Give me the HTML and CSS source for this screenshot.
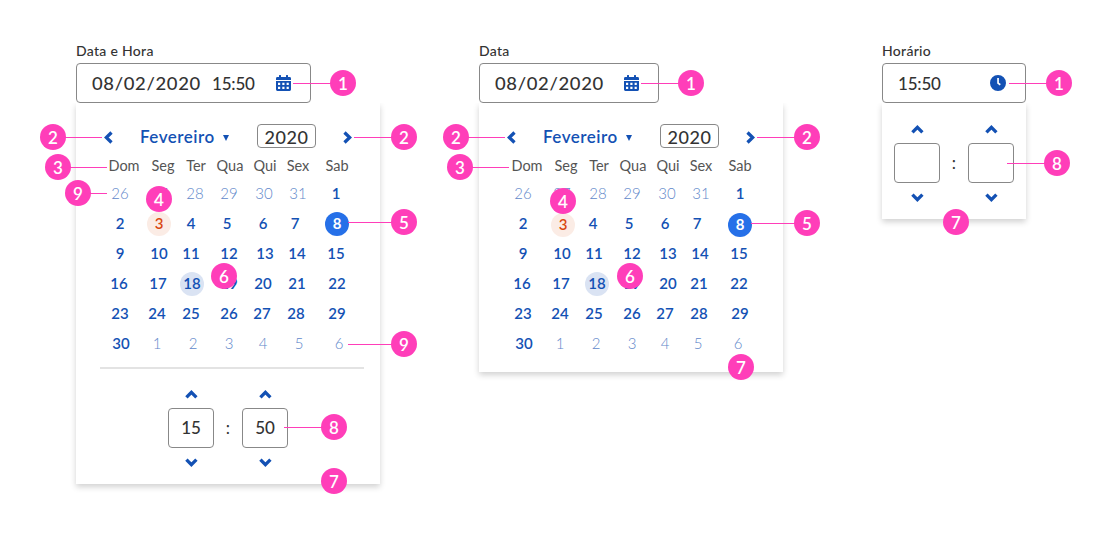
FILE: index.html
```html
<!DOCTYPE html>
<html lang="pt-BR">
<head>
<meta charset="utf-8">
<title>Data e Hora</title>
<link rel="stylesheet" href="styles.css">
</head>
<body>
<svg class="defs" width="0" height="0" aria-hidden="true">
  <symbol id="cal" viewBox="0 0 15 16"><path fill-rule="evenodd" d="M1.400 2H3V.5Q3 0 3.500 0h1Q5 0 5 .5V2h5V.5q0-.5.5-.5h1q.5 0 .5.5V2h1.600Q15 2 15 3.400V5H0V3.400Q0 2 1.400 2zM0 6h15v8.600Q15 16 13.600 16H1.400Q0 16 0 14.600zM2 7.700v2.200h2.200V7.700zM6.300 7.700v2.200h2.200V7.700zM10.600 7.700v2.200h2.200V7.700zM2 11.800v2.200h2.200v-2.200zM6.300 11.800v2.200h2.200v-2.200zM10.600 11.800v2.200h2.200v-2.200z"/></symbol>
  <symbol id="clock" viewBox="0 0 16 16"><path fill-rule="evenodd" d="M8 0a8 8 0 1 1 0 16A8 8 0 0 1 8 0zM7.200 3.100v5.500l2.600 1.900 1-1.400-1.900-1.400V3.100z"/></symbol>
  <symbol id="left" viewBox="0 0 9 13"><path class="stroke" d="M7.500 1.500 2.300 6.500l5.200 5"/></symbol>
  <symbol id="right" viewBox="0 0 9 13"><path class="stroke" d="M1.500 1.500 6.700 6.500l-5.200 5"/></symbol>
  <symbol id="up" viewBox="0 0 13 9"><path class="stroke" d="M1.400 7.400 6.400 2.400l5 5"/></symbol>
  <symbol id="down" viewBox="0 0 13 9"><path class="stroke" d="M1.400 1.600 6.400 6.600l5-5"/></symbol>
</svg>

<main class="board">
  <section class="picker">
    <label class="label">Data e Hora</label>
    <div class="field field-datetime"><span class="date">08/02/2020</span><span class="clock-value">15:50</span><svg class="icon-cal"><use href="#cal"/></svg></div>
    <div class="panel panel-datetime">
      <div class="nav"><svg class="side"><use href="#left"/></svg><span class="month">Fevereiro</span><i class="caret"></i><span class="year">2020</span><svg class="side"><use href="#right"/></svg></div>
      <div class="week"><span>Dom</span><span>Seg</span><span>Ter</span><span>Qua</span><span>Qui</span><span>Sex</span><span>Sab</span></div>
      <div class="days">
        <b class="off">26</b><b class="off r1">27</b><b class="off r3">28</b><b class="off">29</b><b class="off r1">30</b><b class="off r1">31</b><b class="l1">1</b>
        <b>2</b><b class="today r1">3</b><b class="l1">4</b><b class="l2">5</b><b>6</b><b class="l2">7</b><b class="selected">8</b>
        <b>9</b><b class="r1">10</b><b class="l1">11</b><b>12</b><b class="r2">13</b><b>14</b><b class="l1">15</b>
        <b class="l1">16</b><b>17</b><b class="hover">18</b><b>19</b><b>20</b><b>21</b><b>22</b>
        <b>23</b><b class="l1">24</b><b class="l1">25</b><b>26</b><b class="l1">27</b><b class="l1">28</b><b>29</b>
        <b class="r1">30</b><b class="off l1">1</b><b class="off r1">2</b><b class="off">3</b><b class="off">4</b><b class="off r2">5</b><b class="off r2">6</b>
      </div>
      <div class="divider"></div>
      <div class="time">
        <div class="unit"><svg class="step"><use href="#up"/></svg><span class="box">15</span><svg class="step"><use href="#down"/></svg></div>
        <span class="colon">:</span>
        <div class="unit"><svg class="step"><use href="#up"/></svg><span class="box">50</span><svg class="step"><use href="#down"/></svg></div>
      </div>
    </div>
  </section>

  <section class="picker">
    <label class="label">Data</label>
    <div class="field field-date"><span class="date">08/02/2020</span><svg class="icon-cal"><use href="#cal"/></svg></div>
    <div class="panel panel-date">
      <div class="nav"><svg class="side"><use href="#left"/></svg><span class="month">Fevereiro</span><i class="caret"></i><span class="year">2020</span><svg class="side"><use href="#right"/></svg></div>
      <div class="week"><span>Dom</span><span>Seg</span><span>Ter</span><span>Qua</span><span>Qui</span><span>Sex</span><span>Sab</span></div>
      <div class="days">
        <b class="off">26</b><b class="off r1">27</b><b class="off r3">28</b><b class="off">29</b><b class="off r1">30</b><b class="off r1">31</b><b>1</b>
        <b>2</b><b class="today r2 lower">3</b><b class="l2">4</b><b class="l3">5</b><b class="l1">6</b><b class="l3">7</b><b class="selected lower2">8</b>
        <b>9</b><b class="r1">10</b><b class="l1">11</b><b>12</b><b class="r2">13</b><b>14</b><b class="l1">15</b>
        <b class="l1">16</b><b>17</b><b class="hover r2">18</b><b>19</b><b class="r2">20</b><b class="l1">21</b><b class="l1">22</b>
        <b>23</b><b class="l1">24</b><b class="l1">25</b><b>26</b><b class="l1">27</b><b class="l1">28</b><b>29</b>
        <b class="r1">30</b><b class="off l1">1</b><b class="off r1">2</b><b class="off">3</b><b class="off l1">4</b><b class="off l2">5</b><b class="off l2">6</b>
      </div>
    </div>
  </section>

  <section class="picker picker-time">
    <label class="label">Horário</label>
    <div class="field field-time"><span class="clock-value">15:50</span><svg class="icon-clock"><use href="#clock"/></svg></div>
    <div class="panel panel-time">
      <div class="time">
        <div class="unit"><svg class="step"><use href="#up"/></svg><span class="box"></span><svg class="step"><use href="#down"/></svg></div>
        <span class="colon">:</span>
        <div class="unit"><svg class="step"><use href="#up"/></svg><span class="box"></span><svg class="step"><use href="#down"/></svg></div>
      </div>
    </div>
  </section>
</main>

<svg class="callouts" viewBox="0 0 1112 534">
  <path class="leaders" d="M293 83.500h40M63 137.500h39M68 167.500h39M354 137.500h40M88 193.500h19M348 222.500h46M348 344.500h46M284 427.500h40M466 137.500h39M470 167.500h39M641 83.500h40M757 137.500h40M751 223.500h46M1009 83.500h40M1007 163.500h40"/>
  <g class="dots">
    <circle cx="343" cy="83" r="13"/><circle cx="53" cy="137" r="13"/><circle cx="58" cy="167" r="13"/><circle cx="404" cy="137" r="13"/><circle cx="78" cy="193" r="13"/><circle cx="159" cy="199" r="13"/><circle cx="404" cy="222" r="13"/><circle cx="224" cy="276" r="13"/><circle cx="404" cy="344" r="13"/><circle cx="334" cy="427" r="13"/><circle cx="334" cy="481" r="13"/>
    <circle cx="691" cy="83" r="13"/><circle cx="456" cy="137" r="13"/><circle cx="460" cy="167" r="13"/><circle cx="807" cy="137" r="13"/><circle cx="563" cy="201" r="13"/><circle cx="807" cy="223" r="13"/><circle cx="630" cy="276" r="13"/><circle cx="741" cy="367" r="13"/>
    <circle cx="1059" cy="83" r="13"/><circle cx="1057" cy="163" r="13"/><circle cx="956" cy="222" r="13"/>
  </g>
  <g class="numbers">
    <text x="343" y="90">1</text><text x="53" y="144">2</text><text x="58" y="174">3</text><text x="404" y="144">2</text><text x="78" y="200">9</text><text x="159" y="206">4</text><text x="404" y="229">5</text><text x="224" y="283">6</text><text x="404" y="351">9</text><text x="334" y="434">8</text><text x="334" y="488">7</text>
    <text x="691" y="90">1</text><text x="456" y="144">2</text><text x="460" y="174">3</text><text x="807" y="144">2</text><text x="563" y="208">4</text><text x="807" y="230">5</text><text x="630" y="283">6</text><text x="741" y="374">7</text>
    <text x="1059" y="90">1</text><text x="1057" y="170">8</text><text x="956" y="229">7</text>
  </g>
</svg>
</body>
</html>
```

FILE: styles.css
```css
* { box-sizing: border-box; }
body {
  margin: 0;
  height: 534px;
  position: relative;
  overflow: hidden;
  background: #fff;
  color: #333;
  font-family: Lato, "Open Sans", sans-serif;
}
.defs { position: absolute; }
svg { display: block; flex: none; fill: #1351b4; }
.stroke { fill: none; stroke: #1351b4; stroke-width: 3.3; stroke-linecap: butt; }

.board { display: flex; gap: 99px; padding: 41px 0 0 76px; }
.picker { width: 304px; }
.picker-time { width: 144px; }
.label { display: block; height: 22px; line-height: 20px; font-size: 14px; font-weight: 500; letter-spacing: .3px; }

.field {
  display: flex;
  align-items: center;
  height: 40px;
  padding: 0 19px 0 15px;
  border: 1px solid #888;
  border-radius: 4px;
  background: #fff;
  font-size: 17px;
  font-weight: 500;
  white-space: nowrap;
}
.field svg { margin-left: auto; }
.field-datetime { width: 235px; }
.field-date { width: 180px; }
.date { width: 120px; letter-spacing: .6px; transform: scaleX(1.085); transform-origin: 0 50%; }
.clock-value { letter-spacing: -.2px; }
.icon-cal { width: 15px; height: 16px; }
.icon-clock { width: 16px; height: 16px; }

.panel { padding-top: 21px; background: #fff; box-shadow: 0 3px 6px rgba(0, 0, 0, .18); clip-path: inset(0 -12px -14px -12px); }
.panel-datetime { height: 381px; }
.panel-date { height: 269px; }
.panel-time { height: 116px; padding-top: 22px; }

.nav { display: flex; align-items: center; height: 24px; padding-left: 28px; }
.side { width: 9px; height: 13px; margin-top: 2px; }
.month { width: 83px; margin-left: 27px; color: #1351b4; font-size: 17px; font-weight: 600; letter-spacing: .5px; }
.caret { width: 6px; border: solid transparent; border-width: 6px 3px 0; border-top-color: #1351b4; margin-top: 3px; }
.year { width: 59px; height: 24px; margin: 0 27px 0 28px; border: 1px solid #888; border-radius: 4px; line-height: 24px; text-align: center; font-size: 18px; font-weight: 500; letter-spacing: .5px; }

.week, .days { display: grid; }
.week { grid-template-columns: 39px 33px 34px 35px 33px 39px 24px; margin: 6px 0 1px 36px; height: 24px; line-height: 24px; color: #555; font-size: 14.5px; }
.week span { width: 24px; display: flex; justify-content: center; }
.days { grid-template-columns: 38px 34px 37px 34px 34px 40px 24px; grid-auto-rows: 30px; align-items: center; margin-left: 32px; }
.days b { width: 24px; height: 24px; border-radius: 50%; line-height: 22px; color: #1351b4; font-size: 15px; font-weight: 600; text-align: center; }
.days .off { color: #5f88ca; font-weight: 300; }
.days .today { background: #fbece5; color: #d9480f; }
.days .selected { background: #2670e8; color: #fff; font-weight: 700; }
.days .hover { background: #dae3f3; }
.l1 { margin-left: -1px; }
.l2 { margin-left: -2px; }
.l3 { margin-left: -3px; }
.r1 { margin-left: 1px; }
.r2 { margin-left: 2px; }
.r3 { margin-left: 3px; }
.lower { margin-top: 1px; }
.lower2 { margin-top: 2px; }
.divider { width: 264px; height: 2px; margin: 8px 0 21px 24px; background: #e3e3e3; }

.time { display: flex; justify-content: center; align-items: center; }
.panel-datetime .time { width: 304px; }
.unit { display: flex; flex-direction: column; align-items: center; width: 46px; }
.step { width: 13px; height: 9px; }
.box { width: 46px; height: 40px; margin: 9px 0 10px; border: 1px solid #888; border-radius: 4px; line-height: 38px; text-align: center; font-size: 17px; font-weight: 500; }
.colon { width: 28px; margin-top: -3px; text-align: center; font-size: 17px; }

.callouts { position: absolute; top: 0; left: 0; width: 1112px; height: 534px; }
.leaders { stroke: #ff3eb9; stroke-width: 1; }
.dots { fill: #ff3eb9; }
.numbers { fill: #fff; font: 600 17px Lato, sans-serif; text-anchor: middle; }
```
